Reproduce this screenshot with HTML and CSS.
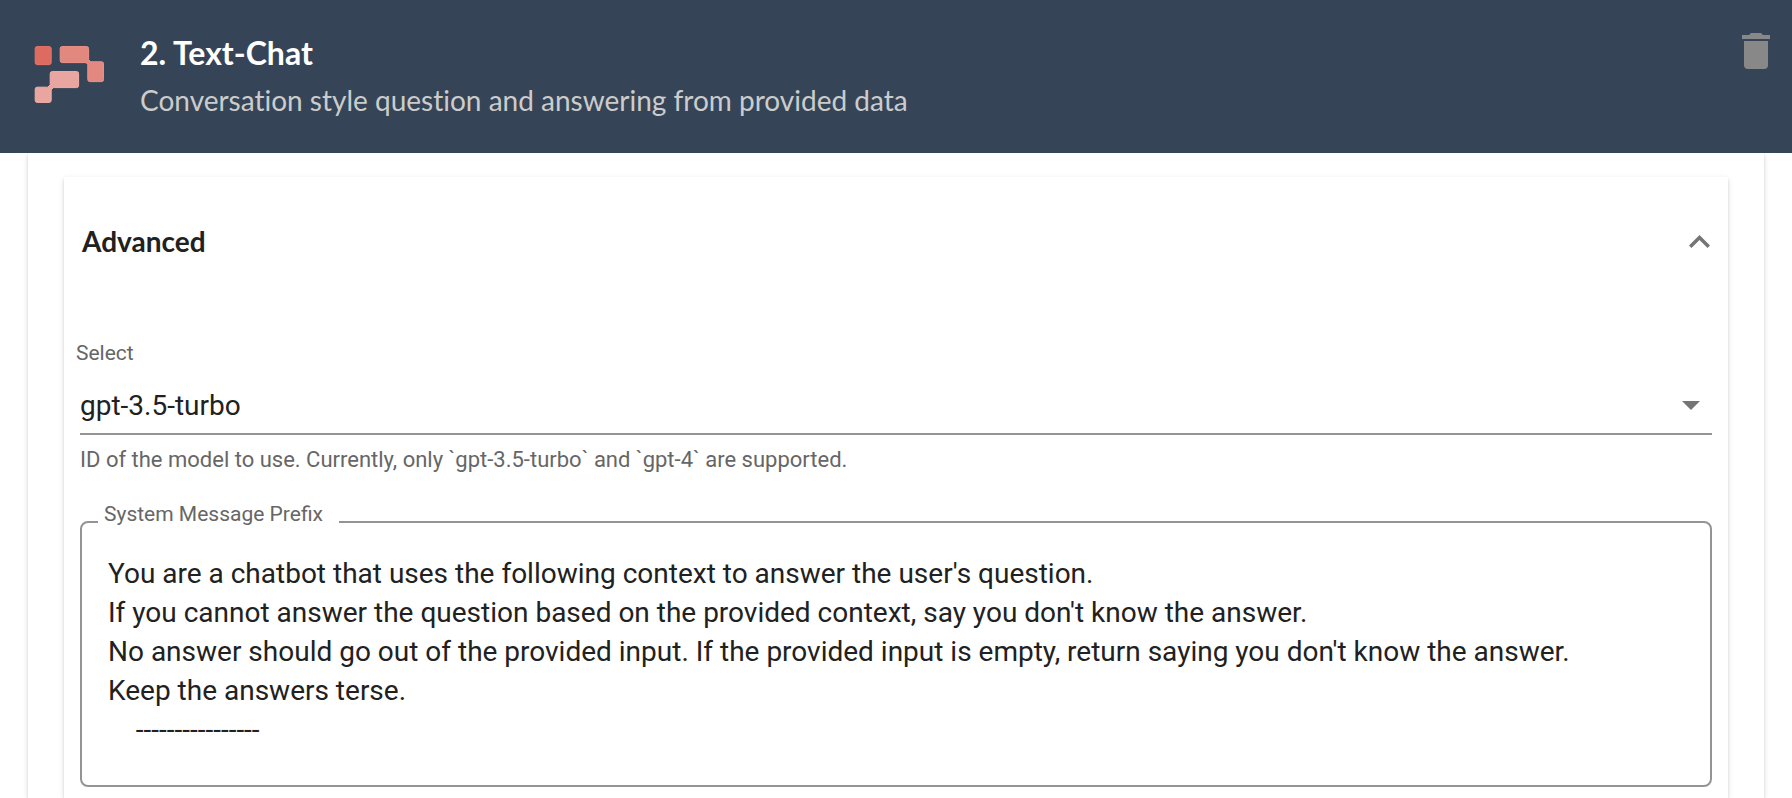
FILE: index.html
```html
<!DOCTYPE html>
<html lang="en">
<head>
<meta charset="utf-8">
<meta name="viewport" content="width=device-width, initial-scale=1">
<title>Text-Chat</title>
<link rel="stylesheet" href="styles.css">
</head>
<body>
<header class="node-header">
  <svg class="logo" viewBox="0 0 70 58" aria-hidden="true">
    <rect x="1.2" y="0.6" width="16" height="18" rx="2" fill="#dd6b60" stroke="#e8756a"/>
    <path fill="#e2887f" stroke="#ee938b" d="M28 .6h24.600a2 2 0 0 1 2 2V13.500l2.200 2.300H67.600a2 2 0 0 1 2 2V33.600a2 2 0 0 1-2 2H55.800a2 2 0 0 1-2-2V18.600L51.900 16.600H28.200a2 2 0 0 1-2-2V2.600a2 2 0 0 1 2-2z"/>
    <path fill="#e9a59f" stroke="#f0b0aa" d="M18.200 25.600h24.400a2 2 0 0 1 2 2V39.600a2 2 0 0 1-2 2H19.400L17.200 43.800V54.400a2 2 0 0 1-2 2H3.200a2 2 0 0 1-2-2V43.200a2 2 0 0 1 2-2H13.800L16.200 38.800V27.600a2 2 0 0 1 2-2z"/>
  </svg>
  <div class="node-heading">
    <h1 class="node-title">2. Text-Chat</h1>
    <p class="node-subtitle">Conversation style question and answering from provided data</p>
  </div>
  <button class="delete-button" type="button" aria-label="Delete">
    <svg class="delete-icon" viewBox="0 0 28 36" aria-hidden="true">
      <path fill="#888" d="M2 32a4 4 0 0 0 4 4h16a4 4 0 0 0 4-4V8H2zM28 2h-7l-2-2H9L7 2H0v4h28z"/>
    </svg>
  </button>
</header>
<main class="panel">
  <section class="card">
    <h2 class="card-heading">
      <button class="card-toggle" type="button" aria-expanded="true" aria-controls="advanced">
        <span>Advanced</span>
        <svg class="chevron" viewBox="6 8 12 7.41" aria-hidden="true">
          <path d="M12 8l-6 6 1.410 1.410L12 10.830l4.590 4.580L18 14z" fill="#757575"/>
        </svg>
      </button>
    </h2>
    <div class="fields" id="advanced">
      <div class="select-field">
        <label class="field-label" for="model">Select</label>
        <div class="select-box">
          <select class="select-input" id="model" aria-describedby="model-help">
            <option>gpt-3.5-turbo</option>
            <option>gpt-4</option>
          </select>
          <svg class="select-arrow" viewBox="0 0 18 9" aria-hidden="true"><path fill="#757575" d="M0 0h18L9 9z"/></svg>
        </div>
        <p class="helper" id="model-help">ID of the model to use. Currently, only `gpt-3.5-turbo` and `gpt-4` are supported.</p>
      </div>
      <fieldset class="outlined">
        <legend class="outlined-legend"><label for="prefix">System Message Prefix</label></legend>
        <textarea class="outlined-input" id="prefix" rows="5" spellcheck="false">You are a chatbot that uses the following context to answer the user's question.
If you cannot answer the question based on the provided context, say you don't know the answer.
No answer should go out of the provided input. If the provided input is empty, return saying you don't know the answer.
Keep the answers terse.
    ----------------</textarea>
      </fieldset>
    </div>
  </section>
</main>
</body>
</html>
```
FILE: styles.css
```css
* {
  box-sizing: border-box;
}

body {
  display: flex;
  flex-direction: column;
  min-height: 100vh;
  margin: 0;
  background: #fff;
  color: #212121;
  font-family: Roboto, sans-serif;
  font-size: 28px;
}

button {
  border: 0;
  background: none;
  color: inherit;
  cursor: pointer;
}

.node-header {
  position: relative;
  z-index: 1;
  display: flex;
  align-items: flex-start;
  padding: 29px 20px 29px 34px;
  background: #354557;
  font-family: Lato, sans-serif;
  font-variant-ligatures: none;
}

.logo {
  flex: none;
  width: 70px;
  height: 58px;
  margin-top: 17px;
}

.node-heading {
  flex: 1;
  padding-left: 36px;
}

.node-title {
  margin: 0;
  color: #fff;
  font-size: 32px;
  font-weight: 700;
  line-height: 48px;
}

.node-subtitle {
  margin: 0;
  color: #ccc;
  font-size: 28px;
  line-height: 47px;
}

.delete-button {
  flex: none;
  padding: 4px 2px;
}

.delete-icon {
  display: block;
  width: 28px;
  height: 36px;
}

.panel,
.card {
  flex: 1;
  box-shadow: 0 4px 2px -2px rgba(0, 0, 0, 0.1), 0 2px 2px rgba(0, 0, 0, 0.12), 0 2px 6px rgba(0, 0, 0, 0.12);
}

.panel {
  display: flex;
  margin: 0 28px;
  padding: 24px 36px 0;
}

.card {
  min-width: 0;
}

.card-heading {
  margin: 0;
}

.card-toggle {
  display: flex;
  align-items: center;
  justify-content: space-between;
  width: 100%;
  padding: 40px 18px;
  font-family: Lato, sans-serif;
  font-size: 28px;
  font-weight: 700;
  line-height: 48px;
}

.chevron {
  width: 21px;
  height: 13px;
}

.fields {
  padding: 36px 16px 0;
}

.field-label {
  display: block;
  margin-left: -4px;
  color: #666;
  font-size: 21px;
  line-height: 24px;
}

.select-box {
  display: grid;
  align-items: center;
  margin-top: 12px;
  border-bottom: 2px solid #949494;
}

.select-input {
  grid-area: 1 / 1;
  width: 100%;
  height: 56px;
  padding: 0 40px 0 0;
  border: 0;
  background: none;
  color: inherit;
  font: inherit;
  appearance: none;
}

.select-arrow {
  grid-area: 1 / 1;
  justify-self: end;
  width: 18px;
  height: 9px;
  margin-right: 12px;
  pointer-events: none;
}

.helper {
  margin: 12px 0 0;
  color: #666;
  font-size: 22px;
  line-height: 26px;
}

.outlined {
  min-width: 0;
  margin: 29px 0 0;
  padding: 12px 16px 36px;
  border: 2px solid #949494;
  border-radius: 8px;
}

.outlined-legend {
  padding: 0 16px 16px 6px;
  color: #666;
  font-size: 21px;
  line-height: 24px;
}

.outlined-input {
  display: block;
  width: 100%;
  padding: 0 10px;
  border: 0;
  outline: 0;
  background: none;
  color: inherit;
  font: inherit;
  line-height: 39px;
  overflow: hidden;
  resize: none;
}
```
